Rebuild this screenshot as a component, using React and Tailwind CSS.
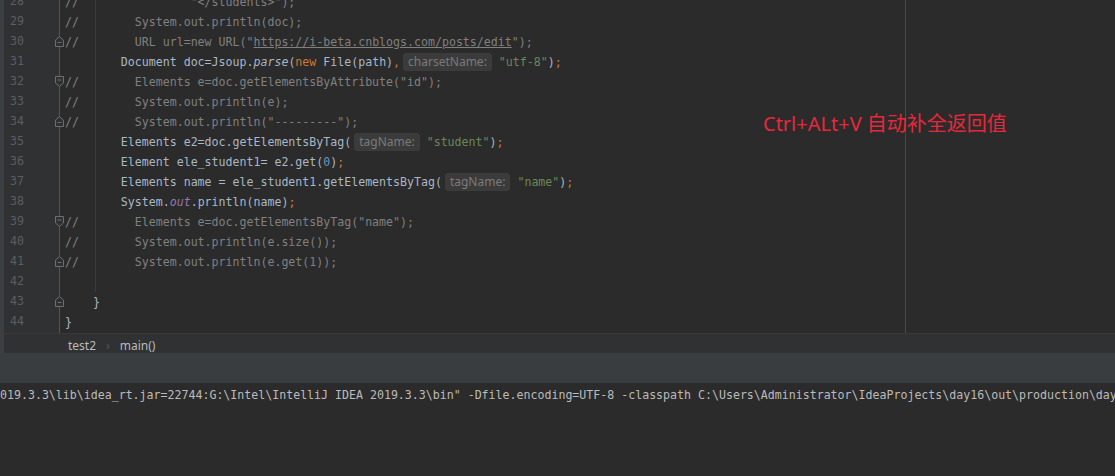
import React from "react";

const tone = {
  d: "text-[#a9b7c6]",
  di: "text-[#a9b7c6] italic",
  c: "text-[#808080]",
  cu: "text-[#808080] underline",
  k: "text-[#cc7832]",
  s: "text-[#6a8759]",
  n: "text-[#6897bb]",
  f: "text-[#9876aa] italic",
};

const lines = [
  { n: 28, t: [["c", '//                "</students>");']] },
  { n: 29, t: [["c", "//        System.out.println(doc);"]] },
  {
    n: 30,
    fold: "end",
    t: [
      ["c", '//        URL url=new URL("'],
      ["cu", "https://i-beta.cnblogs.com/posts/edit"],
      ["c", '");'],
    ],
  },
  {
    n: 31,
    t: [
      ["d", "        Document doc=Jsoup."],
      ["di", "parse"],
      ["d", "("],
      ["k", "new"],
      ["d", " File(path)"],
      ["k", ","],
      ["h", "charsetName:"],
      ["s", ' "utf-8"'],
      ["d", ")"],
      ["k", ";"],
    ],
  },
  { n: 32, fold: "start", t: [["c", '//        Elements e=doc.getElementsByAttribute("id");']] },
  { n: 33, t: [["c", "//        System.out.println(e);"]] },
  { n: 34, fold: "end", t: [["c", '//        System.out.println("---------");']] },
  {
    n: 35,
    t: [
      ["d", "        Elements e2=doc.getElementsByTag("],
      ["h", "tagName:"],
      ["s", ' "student"'],
      ["d", ")"],
      ["k", ";"],
    ],
  },
  {
    n: 36,
    t: [
      ["d", "        Element ele_student1= e2.get("],
      ["n", "0"],
      ["d", ")"],
      ["k", ";"],
    ],
  },
  {
    n: 37,
    t: [
      ["d", "        Elements name = ele_student1.getElementsByTag("],
      ["h", "tagName:"],
      ["s", ' "name"'],
      ["d", ")"],
      ["k", ";"],
    ],
  },
  {
    n: 38,
    t: [
      ["d", "        System."],
      ["f", "out"],
      ["d", ".println(name)"],
      ["k", ";"],
    ],
  },
  { n: 39, fold: "start", t: [["c", '//        Elements e=doc.getElementsByTag("name");']] },
  { n: 40, t: [["c", "//        System.out.println(e.size());"]] },
  { n: 41, fold: "end", t: [["c", "//        System.out.println(e.get(1));"]] },
  { n: 42, t: [] },
  { n: 43, fold: "end", t: [["d", "    }"]] },
  { n: 44, t: [["d", "}"]] },
];

const FoldMark = ({ kind }) => (
  <svg width="9" height="11" viewBox="0 0 9 11" className="block">
    {kind === "start" ? (
      <path d="M0.5 0.5H8.5V7L4.5 10.5L0.5 7Z" fill="#2f3133" stroke="#6e6e6e" />
    ) : (
      <path d="M0.5 10.5H8.5V4L4.5 0.5L0.5 4Z" fill="#2f3133" stroke="#6e6e6e" />
    )}
    <path d={kind === "start" ? "M2.5 4H6.5" : "M2.5 6.5H6.5"} stroke="#6e6e6e" />
  </svg>
);

const Hint = ({ text }) => (
  <span className="inline-block ml-[3px] h-[18px] leading-[18px] px-[5px] rounded-[3px] bg-[#3b3b3b] text-[#7a7a7a] text-[12px] align-middle font-['Noto_Sans',sans-serif]">
    {text}
  </span>
);

const mono = "font-['DejaVu_Sans_Mono','Liberation_Mono',monospace] text-[11.6px]";

export default function App() {
  return (
    <div className="w-[1115px] h-[476px] bg-[#2b2b2b] overflow-hidden flex flex-col">
      <div className="flex h-[353px]">
        <div className="w-[4px] bg-[#3c3f41]" />
        <div className="flex-1 flex flex-col">
          <div className="h-[333px] flex overflow-hidden">
            <div className="w-[56px] bg-[#2f3133] border-r border-[#555] overflow-visible">
              <div className="-mt-[8px]">
                {lines.map((l) => (
                  <div key={l.n} className="relative h-[20px] flex items-center">
                    <span className={`w-[20px] text-right text-[#5c5f61] ${mono}`}>{l.n}</span>
                    {l.fold && (
                      <span className="absolute right-[-5px] top-[4px] z-10">
                        <FoldMark kind={l.fold} />
                      </span>
                    )}
                  </div>
                ))}
              </div>
            </div>
            <div className="relative flex-1 overflow-hidden">
              <div className={`-mt-[8px] pl-[5px] ${mono}`}>
                {lines.map((l) => (
                  <div key={l.n} className="h-[20px] leading-[20px] whitespace-pre flex items-center">
                    {l.t.map(([k, s], i) =>
                      k === "h" ? (
                        <Hint key={i} text={s} />
                      ) : (
                        <span key={i} className={tone[k]}>
                          {s}
                        </span>
                      )
                    )}
                  </div>
                ))}
              </div>
              <div className="absolute left-[35px] top-0 h-[292px] w-px bg-[#3a3a3a]" />
              <div className="absolute left-[845px] top-0 h-full w-px bg-[#4a4a4a]" />
              <div className="absolute left-[703px] top-[112px] text-[20px] leading-[24px] text-[#e6283c] whitespace-nowrap font-['Noto_Sans','Noto_Sans_CJK_SC',sans-serif]">
                Ctrl+ALt+V 自动补全返回值
              </div>
            </div>
          </div>
          <div className="h-[20px] flex items-center pt-[4px] bg-[#2f3133] border-t border-[#393939] pl-[64px] text-[12px] text-[#bbbbbb] font-['Noto_Sans',sans-serif]">
            <span>test2</span>
            <span className="mx-[10px] text-[#5a5a5a]">›</span>
            <span>main()</span>
          </div>
        </div>
      </div>
      <div className="h-[30px] bg-[#3a3d3f]" />
      <div className={`flex-1 pt-[4px] leading-[16px] whitespace-pre text-[#bbbbbb] ${mono}`}>
        {
          '019.3.3\\lib\\idea_rt.jar=22744:G:\\Intel\\IntelliJ IDEA 2019.3.3\\bin" -Dfile.encoding=UTF-8 -classpath C:\\Users\\Administrator\\IdeaProjects\\day16\\out\\production\\day16'
        }
      </div>
    </div>
  );
}
